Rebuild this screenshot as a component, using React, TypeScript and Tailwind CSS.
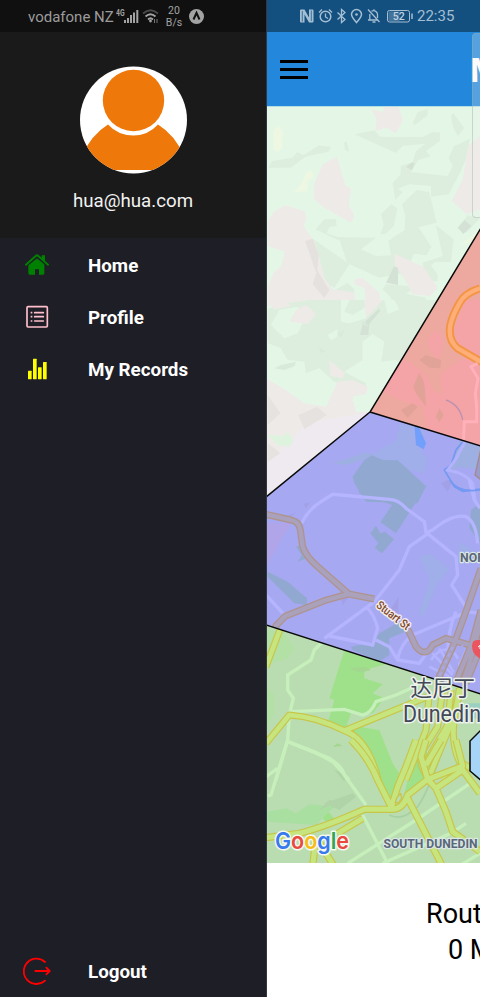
import React from "react";

function StatusLeft() {
  return (
    <div className="h-8 bg-[#101010] flex items-center text-[#9c9c9c]">
      <span className="ml-[28px] mt-[2px] w-[87px] text-[15px] leading-none whitespace-nowrap">vodafone NZ</span>
      <svg className="w-[94px] h-8 shrink-0" viewBox="115 0 94 32" fill="#a3a3a3">
        <text x="116" y="15.5" fontSize="8.500" fontWeight="700" textLength="8.500" lengthAdjust="spacingAndGlyphs">4G</text>
        <rect x="124" y="20" width="2" height="3" />
        <rect x="127" y="18" width="2" height="5" />
        <rect x="130" y="15" width="2" height="8" />
        <rect x="133" y="12.500" width="2" height="10.500" />
        <rect x="136.300" y="10" width="2" height="13" />
        <g fill="none" strokeWidth="1.800">
          <path d="M143 13.500Q150.500 7 158 13.500" stroke="#4b4b4b" />
          <path d="M145.500 16.500Q150.500 12 155.500 16.500" stroke="#a3a3a3" />
          <path d="M148 19.500Q150.500 17 153 19.500" stroke="#a3a3a3" />
        </g>
        <circle cx="150.500" cy="21" r="1.400" />
        <path d="M154.500 19v4M157 19v4" stroke="#777" />
        <text x="174" y="14" fontSize="10.500" textAnchor="middle">20</text>
        <text x="174" y="26" fontSize="10.500" textAnchor="middle">B/s</text>
        <circle cx="196.500" cy="16.500" r="7.500" />
        <path d="M193.500 19.500L196.500 13L199.500 19.500" fill="none" stroke="#101010" strokeWidth="2" />
      </svg>
    </div>
  );
}

function StatusRight() {
  return (
    <div className="h-8 shrink-0 bg-[#14507f] flex items-center text-[#a4bed3]">
      <svg className="ml-[31px] w-[117px] h-8 shrink-0" viewBox="298 0 117 32" fill="none" stroke="#a4bed3" strokeWidth="1.500">
        <path d="M300 10.500Q300 9.500 301 9.500H304.500L309 17.500V9.500H312.500Q313.500 9.500 313.500 10.500V21.500Q313.500 22.500 312.500 22.500H309L304.500 14.500V22.500H301Q300 22.500 300 21.500Z" fill="#a4bed3" stroke="none" />
        <path d="M302.300 11V21.500M311.300 10.500V21" stroke="#14507f" strokeWidth=".7" />
        <circle cx="325.500" cy="16.500" r="5.300" />
        <path d="M325.500 13.500V17L328 18.500M319 12.500L322 9.500M332 12.500L329 9.500" strokeWidth="1.300" />
        <path d="M337.500 12.500L345 19.500L341.500 22.500V9.500L345 12.500L337.500 19.500" strokeWidth="1.300" />
        <path d="M356.500 22.500C354 19.500 351.500 17 351.500 14.500A5 5 0 0 1 361.500 14.500C361.500 17 359 19.500 356.500 22.500Z" />
        <circle cx="356.500" cy="14.500" r="1.300" fill="#a4bed3" stroke="none" />
        <path d="M368 9.500L379.500 22M368 20H377M369.800 20V14M371.500 11.300C374 9.500 377.500 11.500 377.500 14.500V18M374 9.300V10.500M372.500 22H375.500" strokeWidth="1.300" />
        <rect x="387.500" y="10.500" width="22" height="11.500" rx="2" strokeWidth="1" />
        <rect x="388.500" y="11.500" width="11" height="9.500" fill="#44739a" stroke="none" />
        <path d="M412 13.500V19" />
        <text x="398.700" y="20.200" fontSize="10.500" fontWeight="500" textAnchor="middle" fill="#c0d2e1" stroke="none">52</text>
      </svg>
      <span className="ml-[2px] mt-px text-[15px] leading-none">22:35</span>
    </div>
  );
}

function HomeIcon() {
  return (
    <svg className="w-6 h-6" viewBox="0 0 72 72" fill="#008000">
      <path d="M36 11L58 29V61Q58 65 54 65H42V49H30V65H14Q10 65 10 61V32Z" />
      <path d="M2 38L36 11L70 38" fill="none" stroke="#1e1e26" strokeWidth="8" />
      <path d="M3 35L32 9Q36 5 40 9L69 35" fill="none" stroke="#008000" strokeWidth="6" strokeLinecap="round" />
      <path d="M50 7H60V28L50 19Z" />
    </svg>
  );
}

function ProfileIcon() {
  return (
    <svg className="w-6 h-6" viewBox="0 0 72 72" fill="none" stroke="#ffc0cb" strokeWidth="5">
      <rect x="6" y="5" width="61" height="61" rx="3" />
      <path d="M29 23H55M29 35H55M29 48H55" strokeLinecap="round" />
      <path d="M17 23H22M17 35H22M17 48H22" />
    </svg>
  );
}

function ChartIcon() {
  return (
    <svg className="w-6 h-6" viewBox="0 0 72 72" fill="#ffff00">
      <rect x="9" y="41" width="11" height="26" rx="1.500" />
      <rect x="24" y="5" width="11" height="62" rx="1.500" />
      <rect x="39" y="31" width="11" height="36" rx="1.500" />
      <rect x="54" y="15" width="11" height="52" rx="1.500" />
    </svg>
  );
}

function MenuRow({ icon, label }: { icon: React.ReactNode; label: string }) {
  return (
    <div className="h-[52px] flex items-center">
      <div className="w-[88px] pl-[25px]">{icon}</div>
      <span className="pt-[3px] text-[18.8px] font-bold text-white">{label}</span>
    </div>
  );
}

function Drawer() {
  return (
    <aside className="w-[266px] shrink-0 flex flex-col bg-[#1e1e26]">
      <StatusLeft />
      <div className="h-[206px] bg-[#1a1a1a] flex flex-col items-center pt-[34px]">
        <svg className="w-[108px] h-[108px]" viewBox="0 0 108 108">
          <defs><clipPath id="avatar"><circle cx="54.500" cy="54" r="53.500" /></clipPath></defs>
          <g clipPath="url(#avatar)">
            <rect width="108" height="108" fill="#fff" />
            <path d="M3 90Q12 69 29 58.500Q39 69.500 54.500 69.500Q69 69.500 79 58.500Q96 69 105 90V104H3Z" fill="#ee780a" />
            <circle cx="54.500" cy="34.500" r="30.700" fill="#ee780a" />
          </g>
        </svg>
        <div className="mt-[15px] text-[18.7px] leading-6 text-[#f2f2f2]">hua@hua.com</div>
      </div>
      <nav className="pt-px">
        <MenuRow icon={<HomeIcon />} label="Home" />
        <MenuRow icon={<ProfileIcon />} label="Profile" />
        <MenuRow icon={<ChartIcon />} label="My Records" />
      </nav>
      <div className="mt-auto h-[53px] flex items-center">
        <div className="w-[88px] pl-[23px]">
          <svg className="w-7 h-7" viewBox="0 0 84 84" fill="none" stroke="#ff0000" strokeWidth="5.500" strokeLinecap="round" strokeLinejoin="round">
            <path d="M66 15A38 38 0 1 0 66 71M37 42H80M70 32L80 42L70 52" />
          </svg>
        </div>
        <span className="pt-[3px] text-[18.8px] font-bold text-white">Logout</span>
      </div>
    </aside>
  );
}

/* Terrain above the zone boundaries */
function Hills() {
  return (
    <g>
      <rect x="266" y="106" width="214" height="400" fill="#e4f7e7" />
      <g transform="translate(266 106) scale(.33333)">
        <g fill="#deeede">
          <path d="M7 185L18 165L80 155L93 138L112 147L160 118L195 122L188 137L118 152L75 185Z" />
          <path d="M265 85L325 73L343 92L470 93L500 78L522 80V105L480 135L494 151L456 163L435 198L545 210L560 180L548 155L565 120L612 98L600 160L580 205L548 265L495 272V240L430 235L396 248L410 258L388 282L380 230L404 205V180L440 168L450 135L478 113L410 120L390 141Z" />
          <path d="M440 52L455 18L485 8V28L447 57ZM555 30L562 21L595 67L575 90L560 60ZM234 110L242 107L250 138L237 132Z" />
          <path d="M345 325L375 295L394 307L384 360L358 385H343L353 356ZM408 295L452 252L490 258L512 350L458 364L496 422L482 448L444 443L420 500L340 515L250 475L205 545L165 525L150 430L120 400L140 398L242 468L222 405L148 370L175 340H210L212 360L190 363L182 382L215 393L330 395L285 430L330 450L375 448L367 405L388 390L415 373L418 330Z" />
          <path d="M510 358L563 400L555 468H505L495 480L515 505V525L480 530L470 470L530 450ZM350 550L360 534L450 542L420 563L480 575L475 600H395L370 570Z" />
          <path d="M175 545L205 553L245 530L265 550L262 600H220ZM576 365L605 328L642 337L600 380Z" />
        </g>
        <g fill="#eeeae7">
          <path d="M315 10L332 40L328 75L360 65L390 82L411 42L397 0H357L350 18Z" />
          <path d="M213 152L170 175L144 235L143 278L175 305L255 350L266 330L248 298L255 248L238 238Z" />
          <path d="M5 345L25 315L58 298L115 315L122 335L113 360L148 410L175 515L200 550L265 560L270 600H5V540L23 500L45 480L57 437L5 420Z" />
          <path d="M385 443L472 482L515 545L492 570L440 565L410 510L386 478ZM265 520L290 515L340 560L345 600H300L295 545L265 535Z" />
          <path d="M642 90L607 120L590 220L557 285L602 325L642 310Z" />
        </g>
        <path d="M22 75L35 60L50 72V122L36 139L22 130ZM83 260L108 230L120 200L135 193L145 211L125 225L123 255ZM583 418L642 370V400Z" fill="#eef7e2" />
        <path d="M360 530L384 481L396 485V537ZM420 183L438 169L446 172L438 193ZM575 365L596 342L616 360L592 384Z" fill="#d4e2d6" />
        <path d="M117 405L140 398L158 445L154 493L190 553L175 575L140 535L151 500Z" fill="#e4e1de" />
      </g>
      <g transform="translate(266 300) scale(.33333)">
        <path d="M5 25L60 10L130 0H515L450 115L350 250L270 280L205 245L160 205L120 220L65 190L45 145L5 130Z" fill="#deeede" />
        <path d="M5 130L45 147L65 180L115 185L120 225L165 230L185 310L60 305L5 235ZM15 75L40 30L95 20L120 50L95 100L55 115ZM225 0H250L235 35L260 45L310 15L300 55L250 70L225 65ZM355 0H385L400 28L365 42ZM235 215L290 180L290 125L320 102L355 125L345 185L390 180L405 190L310 335L270 325L260 285L300 280V250ZM185 105L215 88L213 110L195 120Z" fill="#e4f7e7" />
        <path d="M0 235L60 270L115 310L180 320L215 245L260 240L305 260L300 285L255 300L310 335L0 590Z" fill="#eeeae7" />
        <path d="M120 370L310 335L0 590V490Q80 420 120 370Z" fill="#efeaef" />
        <path d="M260 290L300 282L310 335H270Z" fill="#e4f7e7" />
        <path d="M190 180L237 220L230 235L193 228ZM70 65L90 30L120 15L150 42L125 72ZM0 0H55L75 18L25 28ZM295 0H350L300 55Z" fill="#eeeae7" />
        <path d="M5 285L43 340L5 375ZM97 345L153 321L182 345L115 388ZM5 430L43 460L5 485Z" fill="#e6e2df" />
        <path d="M282 105L290 72L340 25L342 34L310 72L307 105Z" fill="#d4e2d6" />
        <path d="M5 405L55 408L65 395L83 420L70 440L35 435Z" fill="#def3de" />
        <path d="M25 205L45 195L90 185L85 199L55 210ZM215 100L235 91L225 115ZM160 140L178 155L162 158ZM285 70L295 62L307 82Z" fill="#d8ead9" />
      </g>
    </g>
  );
}

function RedZone() {
  return (
    <g clipPath="url(#redClip)">
      <rect x="366" y="220" width="114" height="235" fill="#eda9a0" />
      <g transform="translate(266 300) scale(.33333)">
        <g fill="#f4a4a7">
          <path d="M345 270L395 175L430 185L480 225L500 270L530 285L522 225L560 195L610 165L642 190V440L480 385L470 320L400 300Z" />
          <path d="M600 0H642V180L565 130V80ZM483 120L510 90L533 115L520 180L492 150Z" />
        </g>
        <path d="M460 180L480 165L525 180L523 205L490 203ZM442 260L460 218L475 250L480 320L450 280ZM405 330L440 310L455 320L425 353ZM510 350L520 325L533 345L520 367Z" fill="#e1a297" />
        <path d="M642 -35Q595 -20 580 10Q560 45 553 75Q545 120 575 145L650 188" fill="none" stroke="#f39543" strokeWidth="24" />
        <path d="M642 -35Q595 -20 580 10Q560 45 553 75Q545 120 575 145L650 188" fill="none" stroke="#ffae78" strokeWidth="13" />
        <path d="M635 190L615 200L636 235L628 280L632 320V365H595L592 430" fill="none" stroke="#ffb0b8" strokeWidth="9" />
        <path d="M540 300Q582 315 590 360" fill="none" stroke="#bd91ae" strokeWidth="4" />
      </g>
    </g>
  );
}

function BlueZone() {
  const major = "M0 103L75 120Q100 125 103 150L110 200Q120 230 155 260L248 342L325 357M0 520L30 437L57 409L175 362L248 342M425 447L450 500Q480 535 500 495L540 475L618 497M645 265L605 380L565 490L515 600M645 390L618 490L570 605M645 425L610 550L590 610M645 500L600 610";
  return (
    <g clipPath="url(#blueClip)">
      <rect x="266" y="405" width="214" height="295" fill="#a7a8f2" />
      <g transform="translate(266 300) scale(.33333)">
        <path d="M300 475L345 445L390 420L400 370L450 380L475 395L465 450L485 480L475 520L430 510L390 485Z" fill="#a0aeea" />
        <path d="M445 372L457 378L480 430L473 448L450 435Z" fill="#729ffb" />
        <path d="M200 490L300 457L325 465L245 495ZM580 420L642 440V510L580 500L550 515Z" fill="#9eafe2" />
        <path d="M260 530L295 480L318 466L350 480L395 481L480 558L455 610L300 605L265 550Z" fill="#91a9d0" />
        <path d="M590 425L570 450L555 495L535 510L565 560L590 574L642 567" fill="none" stroke="#7399f2" strokeWidth="5" />
        <path d="M595 370V430L568 480L545 510Q600 520 620 550L627 600" fill="none" stroke="#b3b2fd" strokeWidth="9" />
        <path d="M645 445L627 525L645 540" fill="#9a9bcd" stroke="#a58990" strokeWidth="4" />
      </g>
      <g transform="translate(266 480) scale(.33333)">
        <path d="M0 130H75L0 260Z" fill="#b0a5e9" />
        <path d="M270 0H440L480 20L390 160L343 127L378 75L280 40ZM330 137L343 160L357 155L384 178L348 220L326 203L337 190L313 160ZM5 275L65 305L123 355L122 375L85 370L5 290ZM90 200L108 195L122 235L95 245L107 225ZM340 460L400 425L430 450L370 475V525L340 545L260 510L255 500L315 488ZM615 90L642 70V190L610 145Z" fill="#91a9d0" />
        <path d="M460 230L490 220L550 265L540 285L515 310L475 408L455 405L490 300ZM580 185L620 210L570 260Z" fill="#a0aeea" />
        <path d="M57 110L92 95L75 110ZM112 72L132 67L120 85ZM375 385L397 350L397 400ZM525 10L545 0L560 5L545 35ZM225 360L250 350L230 375Z" fill="#a2a1e8" />
        <g fill="none" stroke="#b4b4ff" strokeWidth="10">
          <path d="M107 130Q125 90 165 65L200 43L370 58Q400 60 420 85L475 125L480 157L570 230L575 285L557 315L605 390" />
          <path d="M480 157L500 150Q560 100 600 110Q630 125 635 190M490 158L430 200L400 270L325 365L175 475M305 385Q325 405 335 445L320 495L190 468M330 480L370 500L395 540L460 550L485 515M395 535Q405 490 440 465L605 395M0 345L55 405M610 0L625 60L642 85M570 395Q545 450 545 530M602 395L642 400M610 490L580 560" />
          <path d="M495 540Q530 490 565 520Q595 555 570 590M500 520L560 585M490 560L550 590M520 505L565 580" strokeWidth="8" />
        </g>
        <path d={major} fill="none" stroke="#ae948f" strokeWidth="21" strokeLinejoin="round" />
        <path d={major} fill="none" stroke="#aaa2bc" strokeWidth="13" strokeLinejoin="round" />
        <path d="M552 0Q575 40 642 30" fill="none" stroke="#7399f2" strokeWidth="5" />
        <path d="M560 500L515 600M590 495L560 600" stroke="#aaa7e5" strokeWidth="7" strokeDasharray="12 9" />
      </g>
      <path d="M472 646Q472 640 477 640H481V659Q472 655 472 646Z" fill="#ea555f" />
      <path d="M478 647L480 645.500V649" fill="none" stroke="#fff" />
    </g>
  );
}

function GreenZone() {
  const upper = "M45 20L0 140M0 370L70 285Q150 290 235 332L490 228M235 332Q305 355 337 480M490 220L480 330L420 480M530 210L515 320L465 400Q460 440 490 480M555 210L545 315L475 435M585 205L560 300L485 480M580 205L565 300Q555 370 580 425L642 460M530 480L590 440";
  const lower = "M255 0Q310 55 335 120L375 200M0 293L100 280Q180 260 295 208H375Q410 210 425 165L485 118L590 78L570 0M290 235L215 280M375 205L395 140L420 80L450 0M485 118L465 50L480 0M485 118L510 145L540 215L560 275L642 335M425 175L530 380M480 75L525 0M510 145L590 90L642 160M150 290L140 380M155 300L205 380";
  return (
    <g clipPath="url(#greenClip)">
      <rect x="266" y="620" width="214" height="245" fill="#b9ddb0" />
      <g transform="translate(266 620) scale(.33333)">
        <path d="M0 30L55 40L85 85L65 115L10 130ZM0 200L25 225V280L0 320Z" fill="#b2e0a5" />
        <path d="M235 90L370 130L295 150V175L350 193L320 220L355 235L320 280L255 280L242 315L340 330L400 480H335L275 370L220 325L187 303L205 240L190 235Z" fill="#9fe18a" />
        <path d="M250 145L300 140L315 150L280 158ZM200 380L230 378L215 370Z" fill="#a3d68f" />
        <path d="M600 250H642V300L610 290Z" fill="#9bcfc0" />
        <path d="M450 410L480 390L510 480H420Z" fill="#9fdc86" />
      </g>
      <g transform="translate(266 740) scale(.33333)">
        <path d="M260 0H330L400 100L375 175L335 110L280 30ZM440 60L475 120L410 180ZM148 208L190 218L208 240L180 245Z" fill="#9fe18a" />
        <path d="M5 215L60 205L90 220L130 193L205 200L150 255L5 245Z" fill="#a9dfa0" />
        <path d="M175 190L260 160L270 170L220 210ZM160 210L190 180L220 185ZM205 90L240 100L235 125Z" fill="#b0d3a7" />
        <path d="M540 0Q490 150 455 200Q410 245 370 225" fill="none" stroke="#a6cfa4" strokeWidth="5" />
      </g>
      <g fill="none" stroke="#c7efbc" strokeWidth="10">
        <path transform="translate(266 620) scale(.33333)" d="M175 60L145 90L135 120L65 165V210L82 235L70 285L65 360L30 480M75 275L235 268L290 285Q315 280 330 245L390 225L480 185M65 365L145 395L200 425L250 480" />
        <path transform="translate(266 740) scale(.33333)" d="M65 0L15 165L5 168M65 5L190 55Q230 80 235 105L300 195M290 225L375 390M245 370L450 240L620 125M350 370L555 280L600 250M0 110L35 85M560 390L642 340" />
      </g>
      <g transform="translate(266 620) scale(.33333)" fill="none" strokeLinejoin="round">
        <path d={upper} stroke="#c8c64a" strokeWidth="21" />
        <path d={upper} stroke="#c7e57e" strokeWidth="14" />
      </g>
      <g transform="translate(266 740) scale(.33333)" fill="none" strokeLinejoin="round">
        <path d={lower} stroke="#c8c64a" strokeWidth="22" />
        <path d={lower} stroke="#c7e57e" strokeWidth="15" />
        <path d="M388 187L393 172L404 160L407 174L397 189Z" fill="#b9ddb0" stroke="#c8c64a" strokeWidth="4" />
      </g>
    </g>
  );
}

function MapView() {
  return (
    <svg className="block w-[213px] h-[757px] shrink-0" viewBox="267 106 213 757">
      <defs>
        <clipPath id="redClip"><path d="M484 223L370 412L484 447Z" /></clipPath>
        <clipPath id="blueClip"><path d="M266 497L370 412L484 447V695L266 625Z" /></clipPath>
        <clipPath id="greenClip"><path d="M266 625L484 695V865H266Z" /></clipPath>
      </defs>
      <Hills />
      <RedZone />
      <BlueZone />
      <GreenZone />
      <path d="M484 727L470 741V771L484 783Z" fill="#a6d5f7" />
      <path d="M484 223L370 412L484 447M370 412L266 497M266 625L484 695M484 727L470 741V771L484 783" fill="none" stroke="#090909" strokeWidth="1.500" />
      <rect x="266" y="106" width="214" height="1" fill="#b5dee2" />
      <g paintOrder="stroke" strokeLinejoin="round">
        <text x="0" y="0" transform="translate(375.500 606.500) rotate(38)" fontSize="11.500" fontWeight="500" fill="#7c4928" stroke="#f4ebed" strokeWidth="3" textLength="39" lengthAdjust="spacingAndGlyphs">Stuart St</text>
        <g fill="#596779" stroke="#dce7e6" strokeWidth="2.500" fontWeight="700" fontSize="13.500">
          <text x="460" y="562" textLength="25" lengthAdjust="spacingAndGlyphs">NOR</text>
          <text x="383.500" y="847.500" textLength="94" lengthAdjust="spacingAndGlyphs">SOUTH DUNEDIN</text>
        </g>
        <g fill="#414957" stroke="#edf1ec" strokeWidth="3">
          <text x="410.500" y="696" fontSize="21.500" className="font-['Noto_Sans_CJK_SC',sans-serif]">达尼丁</text>
          <text x="403" y="721.500" fontSize="23" textLength="78" lengthAdjust="spacingAndGlyphs">Dunedin</text>
        </g>
        <text x="275" y="848.500" fontSize="23" fontWeight="600" stroke="#f4f9f1" strokeWidth="3" textLength="74" lengthAdjust="spacingAndGlyphs" className="font-[Inter,sans-serif]"><tspan fill="#3879ed">G</tspan><tspan fill="#e94a3f">o</tspan><tspan fill="#f8bc16">o</tspan><tspan fill="#3879ed">g</tspan><tspan fill="#35a355">l</tspan><tspan fill="#e94a3f">e</tspan></text>
      </g>
    </svg>
  );
}

export default function App() {
  return (
    <div className="relative flex w-[480px] h-[997px] overflow-hidden bg-white font-[Roboto,sans-serif]">
      <Drawer />
      <main className="w-[214px] shrink-0 flex flex-col overflow-hidden border-l border-[#303841]">
        <StatusRight />
        <header className="h-[74px] shrink-0 bg-[#2388dc] flex items-center">
          <div className="ml-[13px] w-[28px] shrink-0 flex flex-col gap-[5px]">
            <span className="h-[3px] bg-black" />
            <span className="h-[3px] bg-black" />
            <span className="h-[3px] bg-black" />
          </div>
          <span className="ml-[162px] mt-[2px] text-[34px] leading-none font-bold text-white">M</span>
        </header>
        <MapView />
        <section className="flex-1 bg-white pt-[33px] text-[27px] leading-[36px] text-black whitespace-nowrap">
          <p className="pl-[159px]">Route</p>
          <p className="pl-[181px]">0 M</p>
        </section>
      </main>
      <div className="absolute left-[472px] top-[33px] w-4 h-[185px] rounded-[4px] border border-[#98aaa0]/40 bg-[#eeeeee]/25" />
    </div>
  );
}
